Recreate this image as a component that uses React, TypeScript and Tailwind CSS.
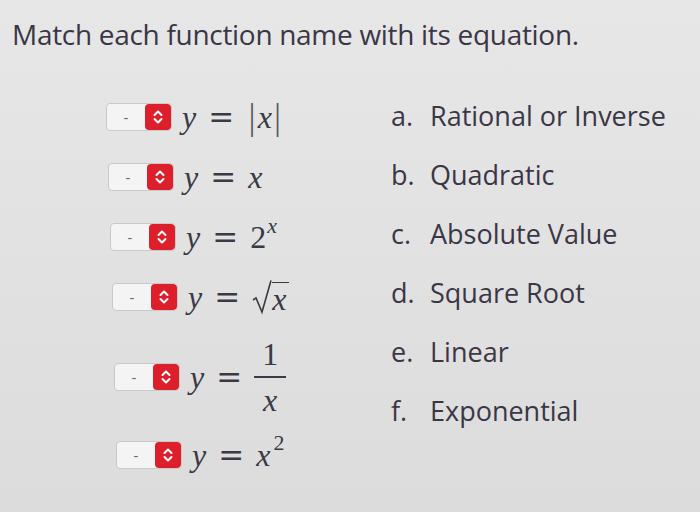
import React from 'react';

const serif = { fontFamily: '"Liberation Serif", "Times New Roman", serif' };
const dejavu = { fontFamily: '"DejaVu Serif", serif' };

const Picker: React.FC = () => (
  <div className="flex h-[28px] w-[66px] shrink-0 overflow-hidden rounded-[4px] border border-[#c9c9c9] bg-[#f4f4f4]">
    <div className="flex flex-1 items-center justify-center text-[15px] text-[#666]">-</div>
    <div className="flex w-[26px] items-center justify-center rounded-[4px] bg-[#dc1f2b]">
      <svg width="12" height="16" viewBox="0 0 12 16" fill="none" stroke="white" strokeWidth="2" strokeLinecap="round" strokeLinejoin="round">
        <path d="M2.5 6 L6 2.5 L9.5 6" />
        <path d="M2.5 10 L6 13.5 L9.5 10" />
      </svg>
    </div>
  </div>
);

const V = ({ children }: { children: React.ReactNode }) => <span className="italic">{children}</span>;
const Eq = () => (
  <span className="mx-[12px] text-[31px] font-light" style={dejavu}>
    =
  </span>
);
const Bar = () => (
  <span className="text-[34px] leading-none font-extralight text-[#555]" style={{ fontFamily: '"DejaVu Sans", sans-serif' }}>
    |
  </span>
);

const rows = [
  {
    pad: 'pl-[106px]',
    h: 'h-[60px]',
    eq: (
      <>
        <V>y</V>
        <Eq />
        <Bar />
        <V>x</V>
        <Bar />
      </>
    ),
  },
  {
    pad: 'pl-[108px]',
    h: 'h-[60px]',
    eq: (
      <>
        <V>y</V>
        <Eq />
        <V>x</V>
      </>
    ),
  },
  {
    pad: 'pl-[110px]',
    h: 'h-[60px]',
    eq: (
      <>
        <V>y</V>
        <Eq />
        <span>2</span>
        <span className="relative -top-[12px] ml-[1px] text-[22px] italic">x</span>
      </>
    ),
  },
  {
    pad: 'pl-[112px]',
    h: 'h-[60px]',
    eq: (
      <>
        <V>y</V>
        <Eq />
        <span className="inline-flex items-end">
          <svg width="20" height="36" viewBox="0 0 20 36" fill="none" stroke="#3a3a45" strokeWidth="1.6" strokeLinejoin="miter">
            <path d="M1 21 L4 19 L10 33 L19 1.5" />
          </svg>
          <span className="border-t-[1.6px] border-[#3a3a45] pr-[3px] leading-[32px] italic">x</span>
        </span>
      </>
    ),
  },
  {
    pad: 'pl-[114px]',
    h: 'h-[100px]',
    eq: (
      <>
        <V>y</V>
        <Eq />
        <span className="inline-flex flex-col items-center">
          <span className="px-[2px] pb-[2px] leading-[40px]">1</span>
          <span className="h-[1.6px] w-[32px] bg-[#3a3a45]" />
          <span className="pt-[2px] leading-[40px] italic">x</span>
        </span>
      </>
    ),
  },
  {
    pad: 'pl-[116px]',
    h: 'h-[56px]',
    eq: (
      <>
        <V>y</V>
        <Eq />
        <V>x</V>
        <span className="relative -top-[13px] ml-[3px] text-[22px]">2</span>
      </>
    ),
  },
];

const answers = [
  ['a.', 'Rational or Inverse'],
  ['b.', 'Quadratic'],
  ['c.', 'Absolute Value'],
  ['d.', 'Square Root'],
  ['e.', 'Linear'],
  ['f.', 'Exponential'],
];

export default function App() {
  return (
    <div
      className="h-[512px] w-[700px] overflow-hidden bg-gradient-to-b from-[#e7e7e7] to-[#dcdcdc] text-[#3b3646]"
      style={{ fontFamily: '"Open Sans", "Noto Sans", sans-serif' }}
    >
      <h1 className="pl-[12px] pt-[14px] text-[28px] leading-[40px] tracking-[-0.3px]">
        Match each function name with its equation.
      </h1>
      <div className="mt-[33px] flex">
        <div className="flex w-[385px] flex-col">
          {rows.map((r, i) => (
            <div key={i} className={`flex items-center ${r.pad} ${r.h}`}>
              <Picker />
              <div className="ml-[10px] flex items-center text-[32px] text-[#3a3a45]" style={serif}>
                {r.eq}
              </div>
            </div>
          ))}
        </div>
        <div className="flex flex-col pl-[6px]">
          {answers.map(([k, t]) => (
            <div key={k} className="flex h-[59px] items-center text-[27px]">
              <span className="w-[39px]">{k}</span>
              <span>{t}</span>
            </div>
          ))}
        </div>
      </div>
    </div>
  );
}
